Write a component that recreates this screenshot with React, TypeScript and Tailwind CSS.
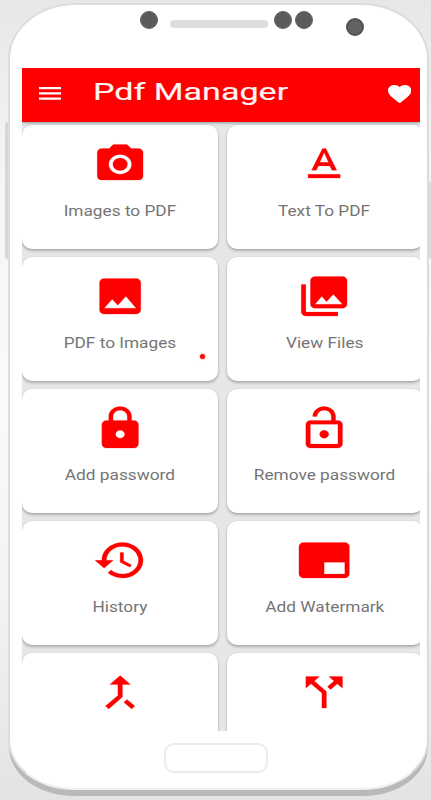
import React from "react";

type Tool = { label: string; path: string; dot?: boolean };

const tools: Tool[] = [
  {
    label: "Images to PDF",
    path: "M12 8.8a3.2 3.2 0 1 0 0 6.4a3.2 3.2 0 1 0 0-6.4zM9 2L7.17 4H4c-1.1 0-2 .9-2 2v12c0 1.1.9 2 2 2h16c1.1 0 2-.9 2-2V6c0-1.1-.9-2-2-2h-3.17L15 2H9zm3 15c-2.76 0-5-2.24-5-5s2.24-5 5-5 5 2.24 5 5-2.24 5-5 5z",
  },
  {
    label: "Text To PDF",
    path: "M5 17v2h14v-2H5zm4.5-4.2h5l.9 2.2h2.1L12.75 4h-1.5L6.5 15h2.1l.9-2.2zM12 5.98L13.87 11h-3.74L12 5.98z",
  },
  {
    label: "PDF to Images",
    dot: true,
    path: "M21 19V5c0-1.1-.9-2-2-2H5c-1.1 0-2 .9-2 2v14c0 1.1.9 2 2 2h14c1.1 0 2-.9 2-2zM8.5 13.5l2.5 3.01L14.5 12l4.5 6H5l3.5-4.5z",
  },
  {
    label: "View Files",
    path: "M22 16V4c0-1.1-.9-2-2-2H8c-1.1 0-2 .9-2 2v12c0 1.1.9 2 2 2h12c1.1 0 2-.9 2-2zm-11-4l2.03 2.71L16 11l4 5H8l3-4zM2 6v14c0 1.1.9 2 2 2h14v-2H4V6H2z",
  },
  {
    label: "Add password",
    path: "M18 8h-1V6c0-2.76-2.24-5-5-5S7 3.24 7 6v2H6c-1.1 0-2 .9-2 2v10c0 1.1.9 2 2 2h12c1.1 0 2-.9 2-2V10c0-1.1-.9-2-2-2zm-6 9c-1.1 0-2-.9-2-2s.9-2 2-2 2 .9 2 2-.9 2-2 2zm3.1-9H8.9V6c0-1.71 1.39-3.1 3.1-3.1 1.71 0 3.1 1.39 3.1 3.1v2z",
  },
  {
    label: "Remove password",
    path: "M12 17c1.1 0 2-.9 2-2s-.9-2-2-2-2 .9-2 2 .9 2 2 2zm6-9h-1V6c0-2.76-2.24-5-5-5S7 3.24 7 6h1.9c0-1.71 1.39-3.1 3.1-3.1 1.71 0 3.1 1.39 3.1 3.1v2H6c-1.1 0-2 .9-2 2v10c0 1.1.9 2 2 2h12c1.1 0 2-.9 2-2V10c0-1.1-.9-2-2-2zm0 12H6V10h12v10z",
  },
  {
    label: "History",
    path: "M13 3c-4.97 0-9 4.03-9 9H1l3.89 3.89.07.14L9 12H6c0-3.87 3.13-7 7-7s7 3.13 7 7-3.13 7-7 7c-1.93 0-3.68-.79-4.94-2.06l-1.42 1.42C8.27 19.99 10.51 21 13 21c4.97 0 9-4.03 9-9s-4.03-9-9-9zm-1 5v5l4.28 2.54.72-1.21-3.5-2.08V8H12z",
  },
  {
    label: "Add Watermark",
    path: "M21 3H3c-1.1 0-2 .9-2 2v14c0 1.1.9 2 2 2h18c1.1 0 2-.9 2-2V5c0-1.1-.9-2-2-2zm0 16h-9v-6h9v6z",
  },
  {
    label: "",
    path: "M17 20.41L18.41 19 15 15.59 13.59 17 17 20.41zM7.5 8H11v5.59L5.59 19 7 20.41l6-6V8h3.5L12 3.5 7.5 8z",
  },
  {
    label: "",
    path: "M14 4l2.29 2.29-2.88 2.88 1.42 1.42 2.88-2.88L20 10V4zm-4 0H4v6l2.29-2.29 4.71 4.7V20h2v-8.41l-5.29-5.3z",
  },
];

function Card({ tool }: { tool: Tool }) {
  return (
    <div className="relative flex h-[124px] flex-col items-center rounded-[10px] bg-white pt-[15.6px] shadow-[0_2px_3px_rgba(0,0,0,0.25),0_0_2px_rgba(0,0,0,0.1)]">
      <svg viewBox="0.15 0.2 24 24" preserveAspectRatio="none" className="h-[47.4px] w-[55px] shrink-0" fill="#ff0000" stroke="#ff0000" strokeWidth="0.1">
        <path fillRule="evenodd" d={tool.path} />
      </svg>
      <span className="mt-[13px] scale-x-[1.15] whitespace-nowrap text-[15px] leading-[20px] text-[#757575]">
        {tool.label}
      </span>
      {tool.dot && <i className="absolute left-[177.5px] top-[97px] size-[5px] rounded-full bg-[#f01010] shadow-[0_0_2px_#ff5050]" />}
    </div>
  );
}

export default function App() {
  return (
    <div className="relative h-[800px] w-[431px] overflow-hidden bg-[linear-gradient(180deg,#e7e7e7_0%,#f5f5f5_22%,#fafafa_50%,#f3f3f3_75%,#e3e3e3_100%)] font-['Roboto','Liberation_Sans',sans-serif]">
      <i className="absolute left-[5px] top-[122px] h-[137px] w-[5px] rounded-l-[2px] bg-[#d6d6d6]" />
      <i className="absolute left-[427px] top-[182px] h-[76px] w-[4px] bg-[#dadada]" />

      <main className="relative ml-[8px] mt-[3px] flex h-[787px] w-[421px] flex-col rounded-[68px_68px_66px_66px/56px_56px_50px_50px] border-2 border-[#dcdcdc] border-b-[#eeeeee] bg-white pl-[12px] shadow-[0_7px_0_-1px_#b9b9b9]">
        <header className="flex h-[63px] shrink-0 items-start pl-[118px]">
          <i className="mt-[6px] size-[18px] rounded-full border border-[#646464] bg-[#5b5b5b]" />
          <i className="ml-[12px] mt-[15px] h-[8px] w-[98px] rounded-full bg-[#dedede]" />
          <i className="ml-[6px] mt-[6px] size-[18px] rounded-full border border-[#646464] bg-[#5b5b5b]" />
          <i className="ml-[3px] mt-[6px] size-[18px] rounded-full border border-[#646464] bg-[#5b5b5b]" />
          <i className="ml-[33px] mt-[13px] size-[18px] rounded-full border-2 border-[#525252] bg-[#626262]" />
        </header>

        <section className="h-[663px] w-[398px] shrink-0 overflow-hidden bg-[#e7e7ea]">
          <div className="relative flex h-[53.5px] items-center bg-[#ff0000] shadow-[0_1px_3px_#8b9999]">
            <svg viewBox="0 0 22 13" className="ml-[17px] mt-[-2px] h-[13px] w-[22px]" fill="#ffffff">
              <path d="M0 0h22v2.2H0zM0 5.3h22v2.2H0zM0 10.6h22v2.2H0z" />
            </svg>
            <h1 className="ml-[31.5px] w-[275px] origin-left scale-x-[1.42] whitespace-nowrap text-[24px] font-normal leading-[28px] text-[#fff5f5] [-webkit-text-stroke:0.15px_#fff5f5]">
              <span className="relative -top-[3px]">Pdf Manager</span>
            </h1>
            <svg viewBox="2 3 20 18.35" preserveAspectRatio="none" className="absolute left-[365.6px] top-[17px] h-[18.3px] w-[23.3px]" fill="#ffffff">
              <path d="M12 21.35l-1.45-1.32C5.4 15.36 2 12.28 2 8.5 2 5.42 4.42 3 7.5 3c1.74 0 3.41.81 4.5 2.09C13.09 3.81 14.76 3 16.5 3 19.58 3 22 5.42 22 8.5c0 3.78-3.4 6.86-8.55 11.54L12 21.35z" />
            </svg>
          </div>
          <div className="grid w-[400px] grid-cols-[196px_196px] gap-x-[8.5px] gap-y-[8px] pt-[3.5px]">
            {tools.map((tool, index) => (
              <Card key={index} tool={tool} />
            ))}
          </div>
        </section>

        <footer className="flex shrink-0 pl-[142px] pt-[12px]">
          <i className="h-[30px] w-[104px] rounded-[10px] border-2 border-[#ececec] bg-white" />
        </footer>
      </main>
    </div>
  );
}
